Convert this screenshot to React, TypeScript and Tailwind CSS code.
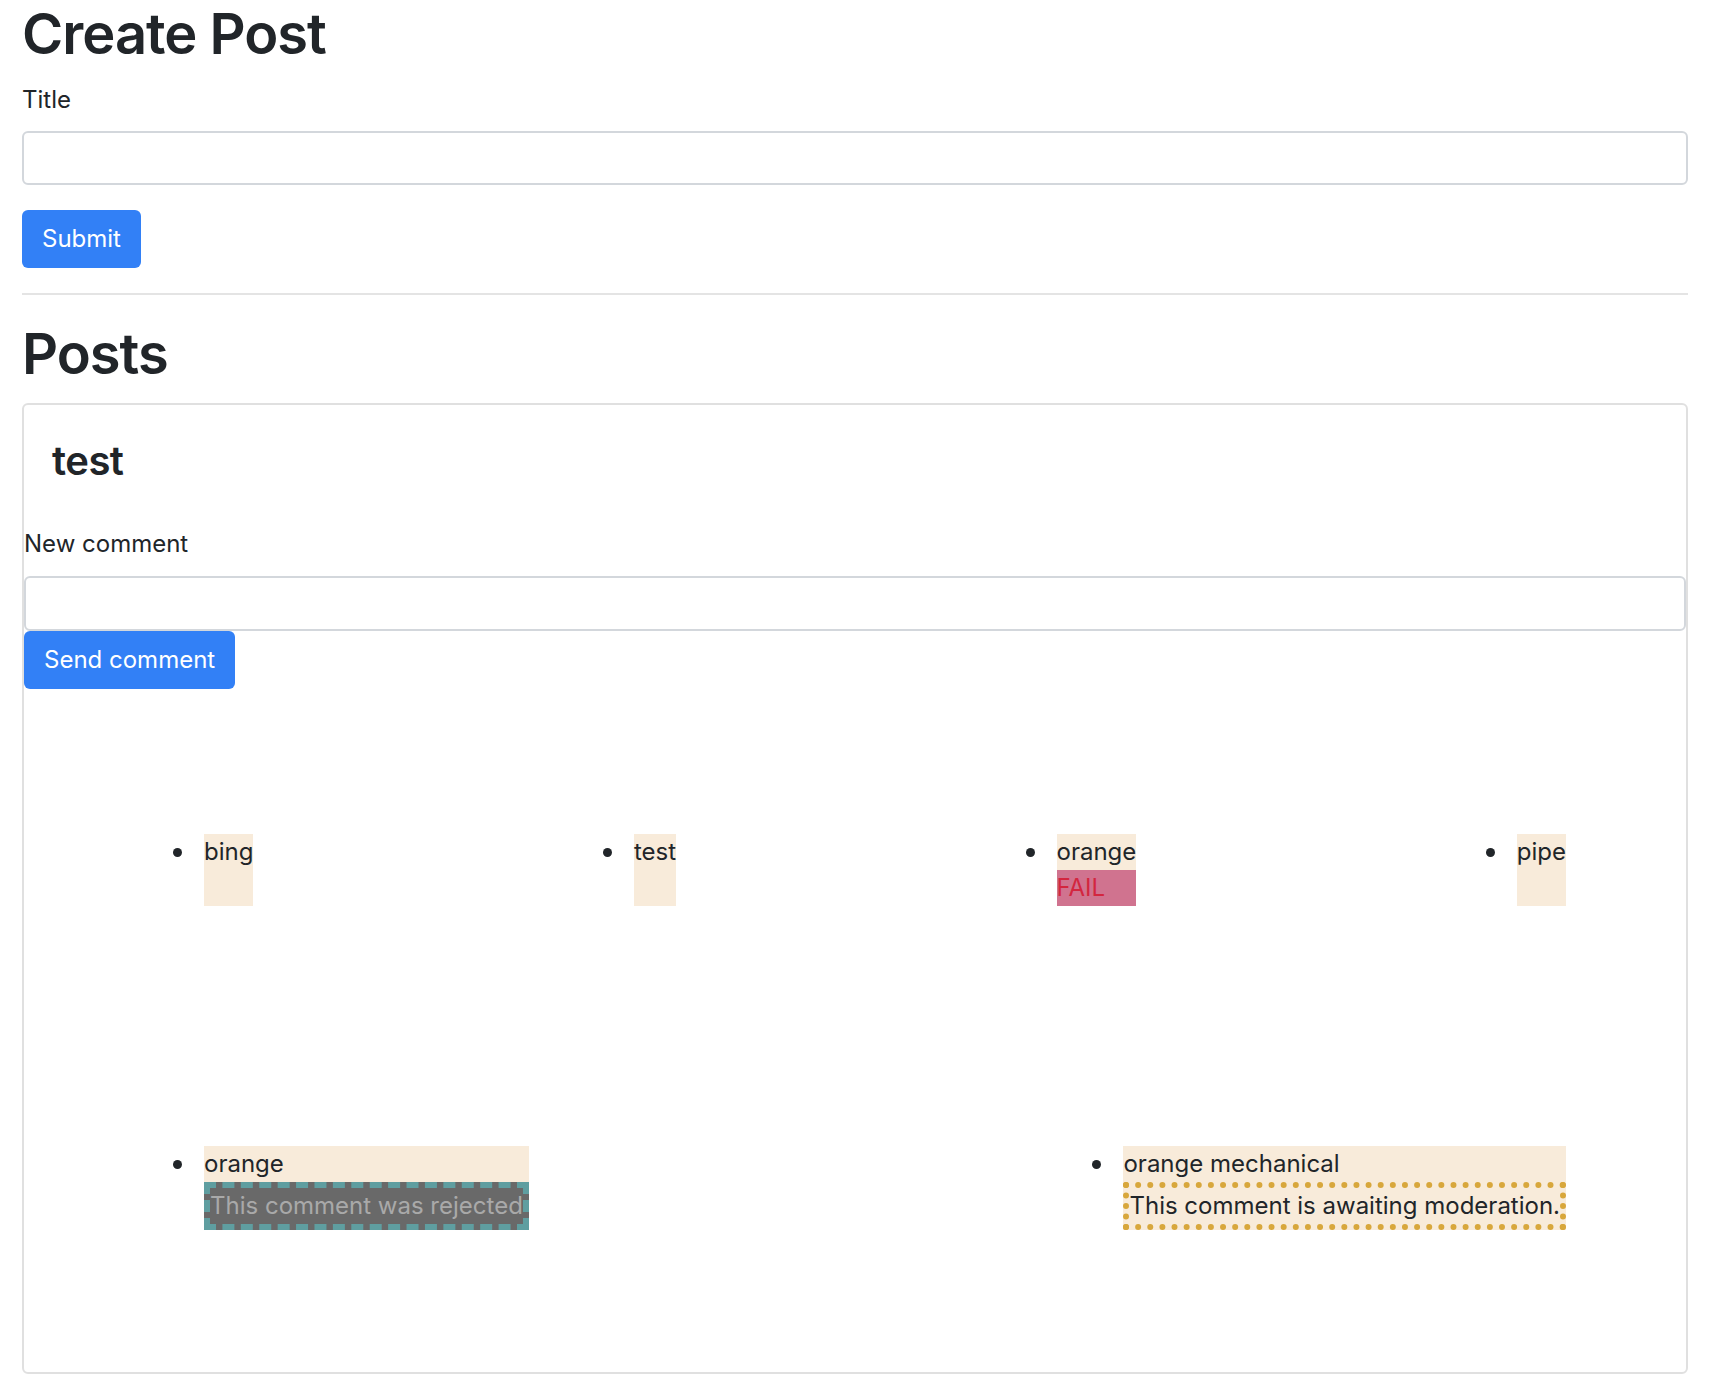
type Status = "fail" | "rejected" | "pending";

type Comment = { text: string; status?: Status };

const ROWS: Comment[][] = [
  [{ text: "bing" }, { text: "test" }, { text: "orange", status: "fail" }, { text: "pipe" }],
  [
    { text: "orange", status: "rejected" },
    { text: "orange mechanical", status: "pending" },
  ],
];

function CommentItem({ comment }: { comment: Comment }) {
  return (
    <div className="flex">
      <div className="flex h-[36px] w-[60px] items-center justify-end pr-[22px]">
        <span className="h-[9px] w-[9px] rounded-full bg-[#212529]" />
      </div>
      <div className="bg-[#f8ebda] leading-[36px]">
        <div>{comment.text}</div>
        {comment.status === "fail" && (
          <div className="bg-[#d0738f] text-[#d3263f]">FAIL</div>
        )}
        {comment.status === "rejected" && (
          <div className="border-[6px] border-dashed border-[#5f9ea0] bg-[#696969] text-[#a9a9a9]">
            This comment was rejected
          </div>
        )}
        {comment.status === "pending" && (
          <div className="border-[6px] border-dotted border-[#d8a73c]">
            This comment is awaiting moderation.
          </div>
        )}
      </div>
    </div>
  );
}

export default function App() {
  return (
    <div className="min-h-[1400px] bg-white px-[22px] font-['Inter','Liberation_Sans',sans-serif] text-[24px] text-[#212529]">
      <h1 className="mb-[14px] text-[56px] leading-[68px] font-semibold tracking-[-1px]">
        Create Post
      </h1>
      <form onSubmit={(e) => e.preventDefault()}>
        <label className="mb-[13px] block leading-[36px]">Title</label>
        <input
          type="text"
          className="block h-[54px] w-full rounded-[6px] border-2 border-[#d3d7dc] bg-white px-4 outline-none"
        />
        <button
          type="submit"
          className="mt-[25px] h-[58px] rounded-[6px] bg-[#3280f6] px-[20px] leading-[36px] text-white"
        >
          Submit
        </button>
      </form>

      <hr className="mt-[25px] mb-[25px] h-[2px] border-0 bg-[#e4e4e4]" />

      <h1 className="mb-[15px] text-[56px] leading-[68px] font-semibold tracking-[-1px]">
        Posts
      </h1>

      <div className="rounded-[6px] border-2 border-[#e0e0e0]">
        <div className="px-[28px] pt-[32px] pb-[27px]">
          <h3 className="mb-[14px] text-[40px] leading-[48px] font-semibold tracking-[-0.5px]">
            test
          </h3>
        </div>
        <label className="mb-[14px] block leading-[36px]">New comment</label>
        <input
          type="text"
          className="block h-[55px] w-full rounded-[6px] border-2 border-[#d3d7dc] bg-white px-4 outline-none"
        />
        <button
          type="button"
          className="h-[58px] rounded-[6px] bg-[#3280f6] px-[20px] leading-[36px] text-white"
        >
          Send comment
        </button>

        <div className="flex flex-col px-[120px] pt-[25px] pb-[22px]">
          {ROWS.map((row, i) => (
            <div key={i} className="my-[120px] flex justify-between">
              {row.map((c, j) => (
                <CommentItem key={j} comment={c} />
              ))}
            </div>
          ))}
        </div>
      </div>
    </div>
  );
}
